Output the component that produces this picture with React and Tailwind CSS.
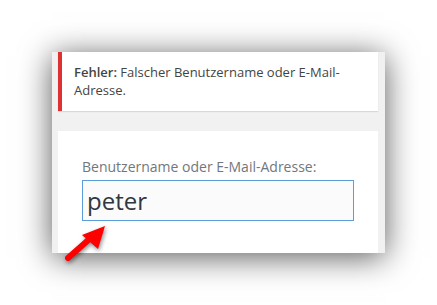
import React from "react"

const font = { fontFamily: '"Open Sans", "Noto Sans", sans-serif' }

const Arrow = () => (
  <svg
    className="absolute left-[60px] top-[220px] drop-shadow-[1px_2px_2px_rgba(0,0,0,0.45)]"
    width="52"
    height="48"
    viewBox="0 0 52 48"
  >
    <line x1="8" y1="38" x2="34" y2="15" stroke="#f00" strokeWidth="6" strokeLinecap="round" />
    <polygon points="45,6 22,15 38,29" fill="#f00" />
  </svg>
)

export default function App() {
  return (
    <div className="relative h-[305px] w-[437px] bg-white pl-[52px] pt-[52px]" style={font}>
      <div className="flex h-[201px] w-[333px] flex-col bg-[#f1f1f1] pl-[6px] pr-[7px] shadow-[0_4px_30px_rgba(0,0,0,0.65)]">
        <div className="h-[59px] border-l-4 border-[#dc3232] bg-white pl-3 pt-[11px] text-[13px] leading-[18px] text-[#444] shadow-[0_1px_1px_rgba(0,0,0,0.1)]">
          <strong className="font-semibold">Fehler:</strong> Falscher Benutzername oder E-Mail-Adresse.
        </div>
        <div className="mt-5 flex-1 bg-white pl-6 pt-[26px]">
          <div className="text-[14px] leading-[20px] text-[#72777c]">Benutzername oder E-Mail-Adresse:</div>
          <div className="mt-[3px] flex h-[41px] w-[272px] items-center border border-[#5b9dd9] bg-[#fbfbfb] pl-[4px] text-[24px] text-[#32373c]">
            peter
          </div>
        </div>
      </div>
      <Arrow />
    </div>
  )
}
